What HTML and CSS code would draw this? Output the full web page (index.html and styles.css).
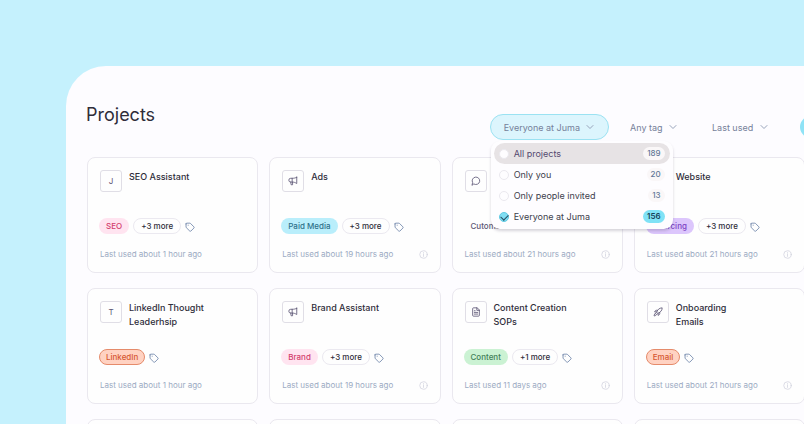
FILE: index.html
```html
<!DOCTYPE html>
<html lang="en">
<head>
<meta charset="utf-8">
<title>Projects</title>
<link rel="stylesheet" href="styles.css">
</head>
<body>
<svg class="sprite" aria-hidden="true">
  <symbol id="chevron" viewBox="0 0 8 8"><path d="M1 2.5 4 5.5 7 2.5"/></symbol>
  <symbol id="tag" viewBox="0 0 24 24"><path d="M2.5 4.5v7.6c0 .6.2 1 .6 1.4l8.3 8.2c.8.8 2 .8 2.8 0l7.2-7.2c.8-.8.8-2 0-2.8L13.2 3.4c-.4-.4-.9-.6-1.4-.6H4.3c-1 0-1.8.8-1.8 1.7Z"/><path d="M7.500 7.700h.3"/></symbol>
  <symbol id="info" viewBox="0 0 24 24"><circle cx="12" cy="12" r="10"/><path d="M12 11v6M12 7v1"/></symbol>
  <symbol id="horn" viewBox="0 0 24 24"><path d="M21 3v15c-4-2.500-7-3.500-11-3.500H6.500a4.500 4.500 0 0 1 0-9H10C14 5.500 17 5 21 3Z"/><path d="M10 5.500v9M6.500 14.500l1 6.500H11v-6"/></symbol>
  <symbol id="chat" viewBox="0 0 24 24"><path d="M7.500 19.500a9 9 0 1 0-3.600-3.700L2.500 21.500Z"/></symbol>
  <symbol id="doc" viewBox="0 0 24 24"><path d="M14 2H6a2 2 0 0 0-2 2v16a2 2 0 0 0 2 2h12a2 2 0 0 0 2-2V8ZM14 2v6h6M8 9h2M8 13h8M8 17h8"/></symbol>
  <symbol id="rocket" viewBox="0 0 24 24"><path d="M9 12c2-6 6-9.500 13-10 0 6-3.500 11-10 13ZM9 12H4c1-4 3.500-5 7-4M12 15v5c4-1 5-3.500 4-7M4.500 16.500c-1.500 1.500-2 5-2 5s3.500-.5 5-2c1-1 1-2 .2-2.800-.9-.9-2.200-1.200-3.200-.2Z"/></symbol>
</svg>

<main class="panel">
  <header class="header">
    <h1 class="heading">Projects</h1>
    <div class="filters">
      <div class="people">
        <button class="people-button" type="button" aria-expanded="true" aria-controls="people-menu">Everyone at Juma <svg class="chevron"><use href="#chevron"/></svg></button>
        <div class="menu" id="people-menu" role="radiogroup" aria-label="People">
          <label class="option option-hover"><input type="radio" name="people"><span>All projects</span><span class="count">189</span></label>
          <label class="option"><input type="radio" name="people"><span>Only you</span><span class="count">20</span></label>
          <label class="option"><input type="radio" name="people"><span>Only people invited</span><span class="count">13</span></label>
          <label class="option"><input type="radio" name="people" checked><span>Everyone at Juma</span><span class="count count-on">156</span></label>
        </div>
      </div>
      <div class="filter"><select aria-label="Tag"><option>Any tag</option></select><svg class="chevron"><use href="#chevron"/></svg></div>
      <div class="filter"><select aria-label="Sort"><option>Last used</option></select><svg class="chevron"><use href="#chevron"/></svg></div>
      <button class="create" type="button" aria-label="New project"></button>
    </div>
  </header>

  <section class="grid">
    <article class="card">
      <div class="top"><span class="icon">J</span><h2>SEO Assistant</h2></div>
      <div class="tags"><span class="tag pink">SEO</span><span class="tag more">+3 more</span><svg class="tag-icon"><use href="#tag"/></svg></div>
      <footer>Last used about 1 hour ago</footer>
    </article>
    <article class="card">
      <div class="top"><span class="icon"><svg><use href="#horn"/></svg></span><h2>Ads</h2></div>
      <div class="tags"><span class="tag blue">Paid Media</span><span class="tag more">+3 more</span><svg class="tag-icon"><use href="#tag"/></svg></div>
      <footer>Last used about 19 hours ago<svg class="info"><use href="#info"/></svg></footer>
    </article>
    <article class="card">
      <div class="top"><span class="icon"><svg><use href="#chat"/></svg></span></div>
      <div class="tags"><span class="tag plain">Cutoms</span></div>
      <footer>Last used about 21 hours ago<svg class="info"><use href="#info"/></svg></footer>
    </article>
    <article class="card">
      <div class="top"><span class="icon"></span><h2>Website</h2></div>
      <div class="tags"><span class="tag purple">Sourcing</span><span class="tag more">+3 more</span><svg class="tag-icon"><use href="#tag"/></svg></div>
      <footer>Last used about 21 hours ago<svg class="info"><use href="#info"/></svg></footer>
    </article>

    <article class="card">
      <div class="top"><span class="icon">T</span><h2>LinkedIn Thought Leaderhsip</h2></div>
      <div class="tags"><span class="tag orange">LinkedIn</span><svg class="tag-icon"><use href="#tag"/></svg></div>
      <footer>Last used about 1 hour ago</footer>
    </article>
    <article class="card">
      <div class="top"><span class="icon"><svg><use href="#horn"/></svg></span><h2>Brand Assistant</h2></div>
      <div class="tags"><span class="tag pink">Brand</span><span class="tag more">+3 more</span><svg class="tag-icon"><use href="#tag"/></svg></div>
      <footer>Last used about 19 hours ago<svg class="info"><use href="#info"/></svg></footer>
    </article>
    <article class="card">
      <div class="top"><span class="icon"><svg><use href="#doc"/></svg></span><h2>Content Creation SOPs</h2></div>
      <div class="tags"><span class="tag green">Content</span><span class="tag more">+1 more</span><svg class="tag-icon"><use href="#tag"/></svg></div>
      <footer>Last used 11 days ago<svg class="info"><use href="#info"/></svg></footer>
    </article>
    <article class="card">
      <div class="top"><span class="icon"><svg><use href="#rocket"/></svg></span><h2>Onboarding<br>Emails</h2></div>
      <div class="tags"><span class="tag orange">Email</span><svg class="tag-icon"><use href="#tag"/></svg></div>
      <footer>Last used about 21 hours ago<svg class="info"><use href="#info"/></svg></footer>
    </article>

    <article class="card"></article>
    <article class="card"></article>
    <article class="card"></article>
    <article class="card"></article>
  </section>
</main>
</body>
</html>
```
FILE: styles.css
```css
* {
  box-sizing: border-box;
}

html {
  height: 100%;
  overflow: hidden;
}

body {
  margin: 0;
  min-height: 100%;
  padding: 66px 0 0 66px;
  background: #c5f1fd;
  color: #2f2d3a;
  font-family: Inter, "Liberation Sans", sans-serif;
  overflow: hidden;
}

.sprite {
  display: none;
}

svg {
  fill: none;
  stroke: currentColor;
  stroke-width: 2;
  stroke-linecap: round;
  stroke-linejoin: round;
}

button,
select {
  font: inherit;
  color: inherit;
  background: none;
  border: 0;
  padding: 0;
  margin: 0;
}

.panel {
  padding: 36px 0 0 20px;
  background: #fdfcff;
  border-top-left-radius: 40px;
}

.header {
  display: flex;
  justify-content: space-between;
  height: 55px;
}

.heading {
  margin: 0;
  font-size: 18px;
  line-height: 26px;
  font-weight: 400;
}

.filters {
  display: flex;
  align-items: flex-start;
  gap: 21px;
  margin: 12px -24px 0 0;
  font-size: 9px;
  color: #76819a;
}

.people {
  position: relative;
}

.people-button {
  display: flex;
  align-items: center;
  gap: 6px;
  height: 26px;
  padding: 0 14px 0 13px;
  border: 1px solid #9be2f2;
  border-radius: 13px;
  background: #dcf5fd;
}

.chevron {
  width: 8px;
  height: 8px;
  stroke-width: 1;
  color: #97a3ba;
}

.filter {
  display: flex;
  align-items: center;
  gap: 6px;
  height: 26px;
  margin-right: 14px;
}

.filter select {
  appearance: none;
}

.create {
  width: 28px;
  height: 22px;
  margin: 2px 0 0 -3px;
  border-radius: 11px;
  background: #8fe3f6;
}

.menu {
  position: absolute;
  z-index: 1;
  top: 27px;
  left: 1px;
  width: 182px;
  padding: 2px 3px 2px;
  border-radius: 9px;
  background: #fefdff;
  box-shadow: 0 2px 3px rgba(60, 50, 80, 0.2);
}

.option {
  display: flex;
  align-items: center;
  gap: 5px;
  height: 21px;
  padding: 0 5px;
  border-radius: 11px;
  color: #403d4c;
}

.option-hover {
  background: #e7e3e5;
  color: #554a70;
}

.option input {
  appearance: none;
  width: 10px;
  height: 10px;
  margin: 0;
  border: 1px solid #ebe9ef;
  border-radius: 50%;
  background: #fefdff;
}

.option input:checked {
  position: relative;
  border-color: #62cbe3;
  background: #80def3;
}

.option input:checked::after {
  content: "";
  position: absolute;
  left: 1px;
  top: 1px;
  width: 6px;
  height: 4px;
  border: solid #244c62;
  border-width: 0 0 1px 1px;
  transform: rotate(-45deg);
}

.count {
  margin-left: auto;
  padding: 0 4px;
  border-radius: 7px;
  background: #faf7f8;
  font-size: 8px;
  line-height: 13px;
  font-weight: 500;
  color: #647797;
}

.count-on {
  background: #80e2f6;
  color: #17425a;
  font-weight: 600;
}

.grid {
  display: grid;
  grid-template-columns: repeat(4, 1fr);
  gap: 15px 11px;
  margin: 0 -1px 0 1px;
}

.card {
  display: flex;
  flex-direction: column;
  height: 116px;
  padding: 12px;
  border: 1px solid #eae8ef;
  border-radius: 8px;
  background: #fefefe;
}

.top {
  display: flex;
  gap: 7px;
  height: 42px;
}

.icon {
  display: flex;
  flex: none;
  align-items: center;
  justify-content: center;
  width: 22px;
  height: 22px;
  border: 1px solid #e0dee6;
  border-radius: 3px;
  font-size: 8px;
  color: #5c5675;
}

.icon svg {
  width: 10px;
  height: 10px;
}

.card h2 {
  margin: 0;
  max-width: 96px;
  font-size: 9px;
  line-height: 14px;
  font-weight: 500;
}

.tags {
  display: flex;
  align-items: center;
  gap: 4px;
  height: 27px;
  margin-left: -1px;
}

.tag {
  height: 16px;
  padding: 0 6px;
  border: 1px solid transparent;
  border-radius: 8px;
  font-size: 8px;
  line-height: 14px;
  font-weight: 500;
  white-space: nowrap;
}

.pink {
  background: #ffe4f0;
  color: #d33c6d;
}

.blue {
  background: #b9eefb;
  color: #2e718a;
}

.purple {
  background: #dcc6fc;
  color: #7c43c4;
}

.orange {
  border-color: #e58b6b;
  background: #ffd2c2;
  color: #d65731;
}

.green {
  background: #cbf2d3;
  color: #438058;
}

.plain {
  color: #5c5675;
}

.more {
  padding: 0 7px;
  border-color: #ebe9f0;
}

.tag-icon {
  width: 10px;
  height: 10px;
  margin-top: 2px;
  color: #6c83a8;
}

.card footer {
  display: flex;
  align-items: center;
  justify-content: space-between;
  height: 10px;
  margin-top: 10px;
  font-size: 8px;
  color: #9cabc3;
}

.info {
  width: 9px;
  height: 9px;
  color: #d0d2de;
}
```
